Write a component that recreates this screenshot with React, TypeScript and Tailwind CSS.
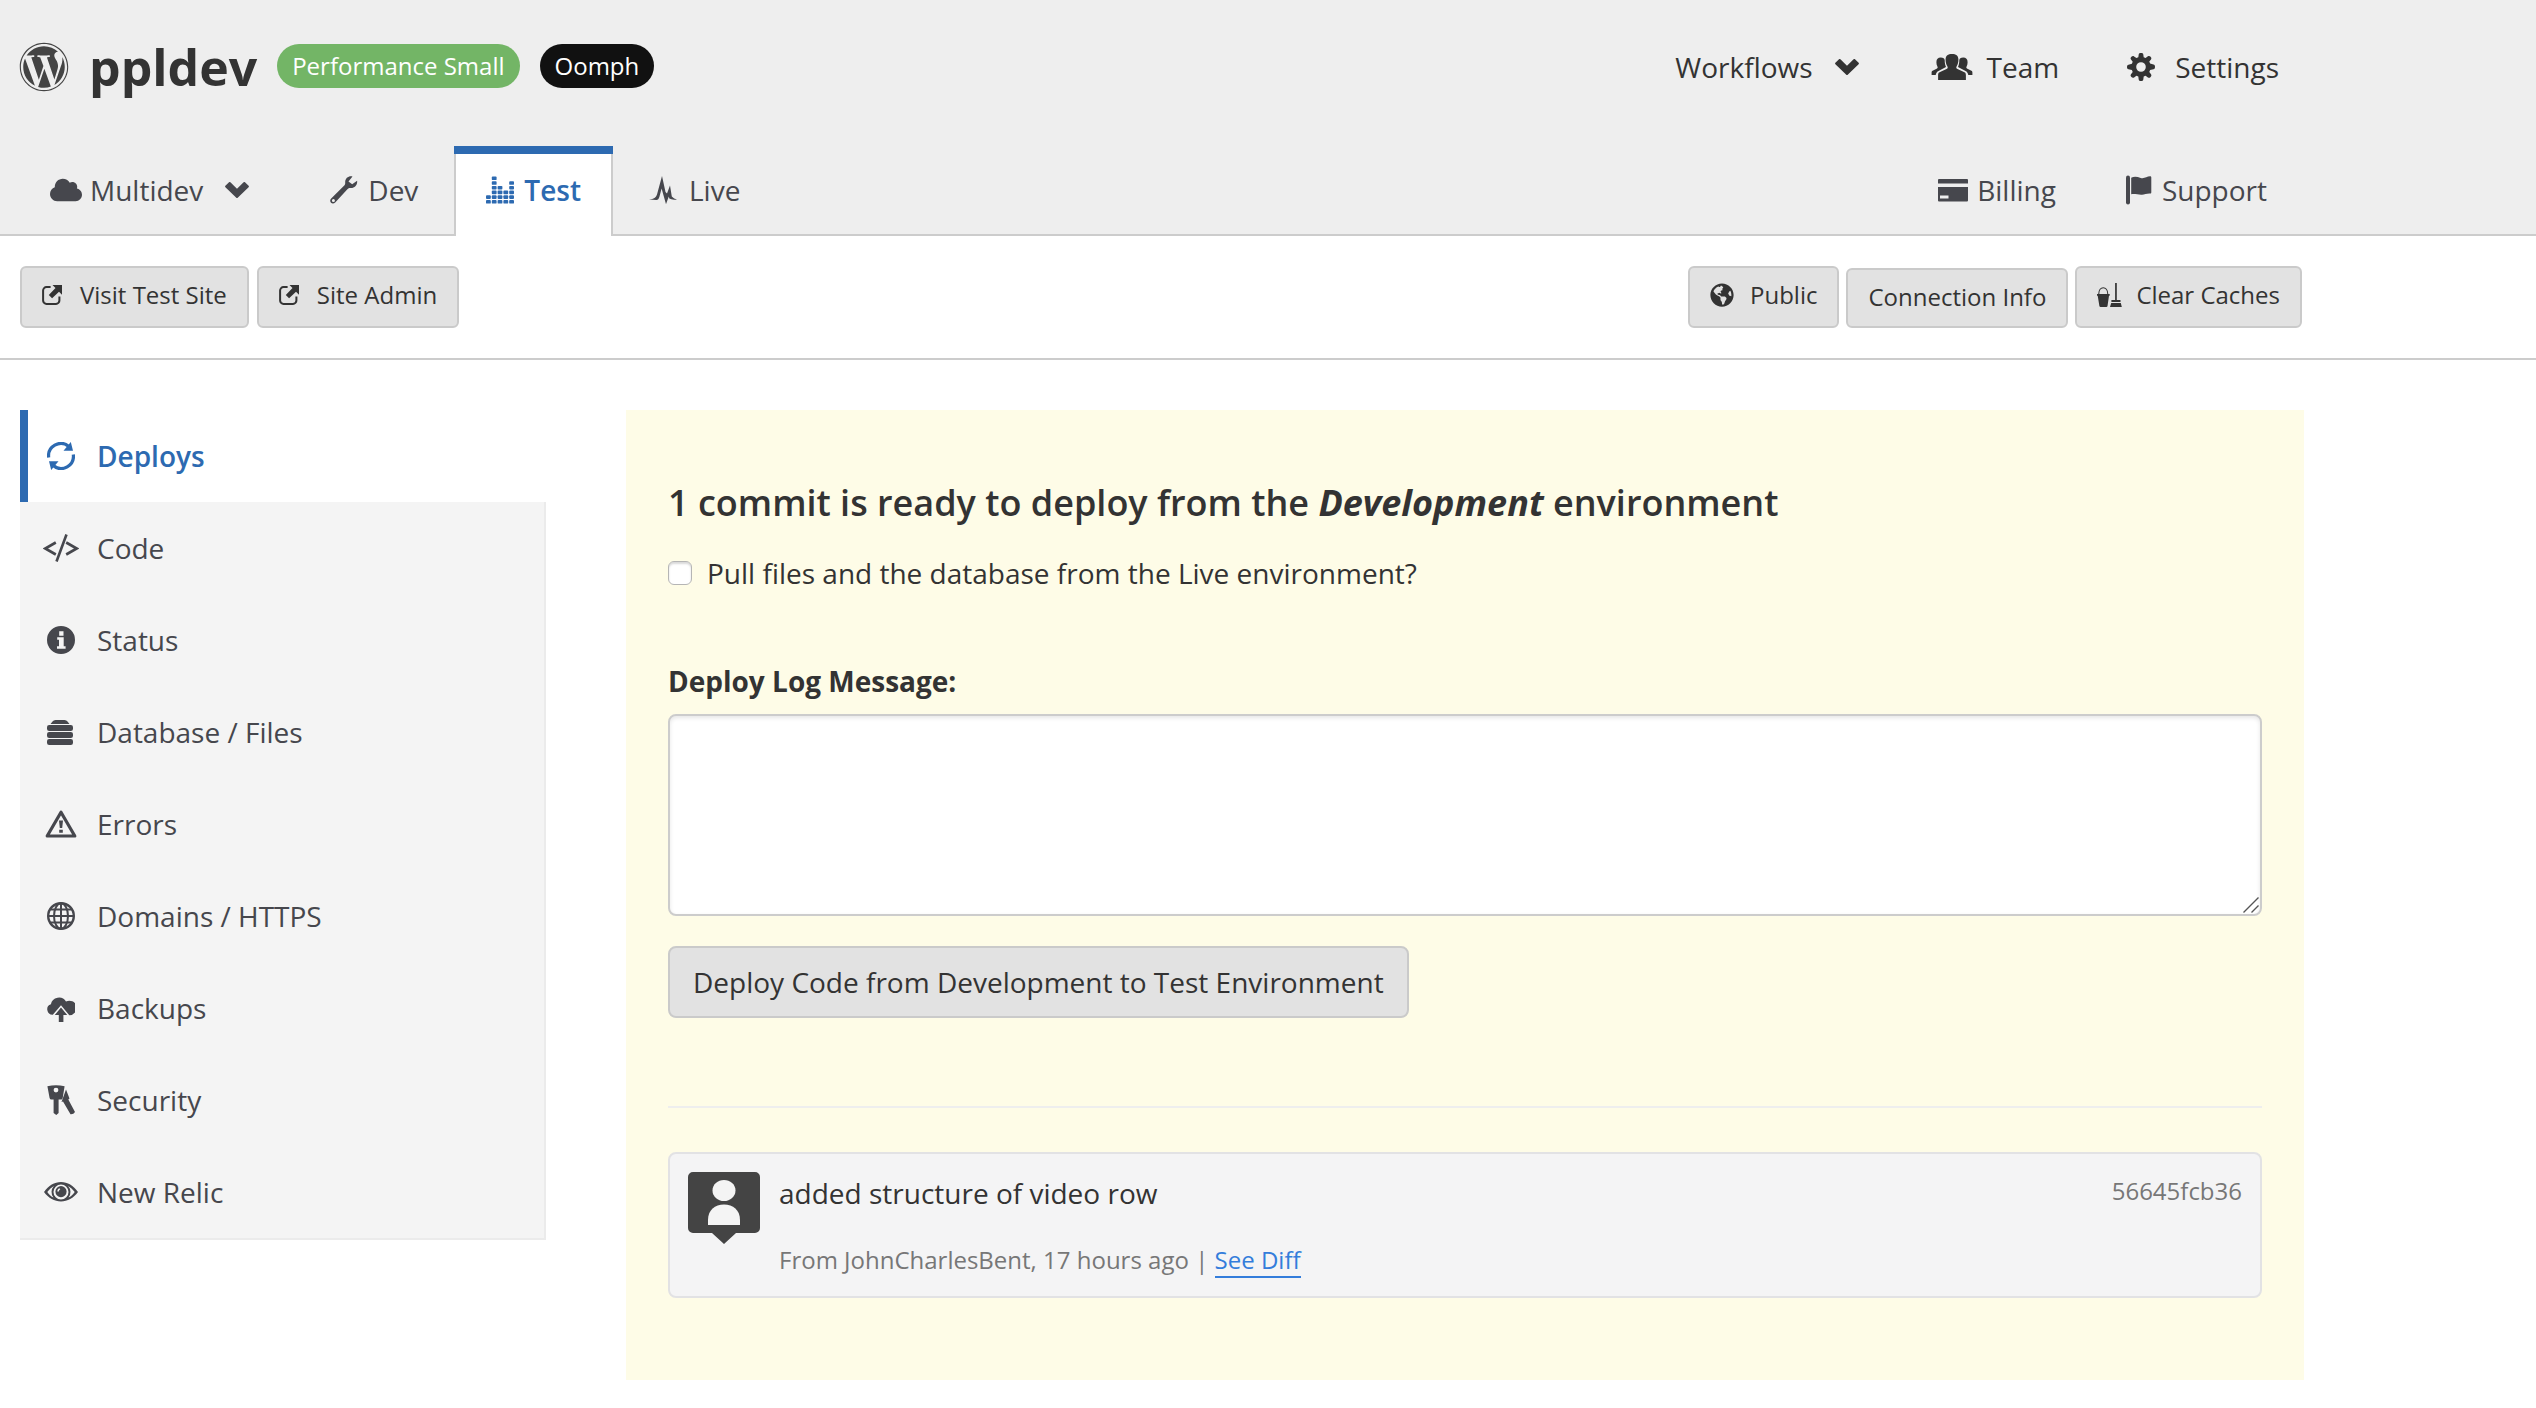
import type { ReactNode } from "react";
import { FaWordpress, FaCloud, FaGlobeAmericas } from "react-icons/fa";

type IconProps = { className?: string };

function Svg({ box = "0 0 28 28", className = "size-7", children }: { box?: string; className?: string; children: ReactNode }) {
  return (
    <svg viewBox={box} className={className} fill="currentColor" aria-hidden="true">
      {children}
    </svg>
  );
}

const Chevron = () => (
  <Svg box="0 0 24 16" className="h-4 w-6">
    <path d="M4 .3a1 1 0 0 1 1.400 0L12 6.800 18.600 .3a1 1 0 0 1 1.400 0l3.600 3.500a1 1 0 0 1 0 1.400L12.700 15.700a1 1 0 0 1-1.400 0L.4 5.200a1 1 0 0 1 0-1.400z" />
  </Svg>
);

const Wrench = () => (
  <Svg>
    <path
      fillRule="evenodd"
      d="M22.500 .5c-4-.9-7.600 2-7.300 6 .1 1.500-.2 2.300-1.200 3.300L1.200 22.400c-1.300 1.300-1.300 3.200-.2 4.300s2.900 1.100 4.200-.2L17.400 13.300c1-1 1.800-1.300 3.300-1.200 3.900.2 7-3.200 6.400-7.300l-4.900 3.400-3.700-2.800zM3.400 23a1.500 1.500 0 1 1 0 3 1.500 1.500 0 0 1 0-3z"
    />
  </Svg>
);

const BAR_DOTS = [2, 6, 4, 3, 5];
const Equalizer = () => (
  <Svg>
    {BAR_DOTS.flatMap((count, col) =>
      Array.from({ length: count }, (_, row) => (
        <rect key={`${col}-${row}`} x={col * 5.8} y={24 - row * 4.7} width="4.8" height="3.6" rx=".9" />
      )),
    )}
  </Svg>
);

const Pulse = () => (
  <Svg>
    <path d="M0 23.400C5 23 7 21.500 8 18.500L13 0l3.500 16 1.500 1.500 3-8 1.800 11q2.200 2.500 5.200 2.900-5 .8-7.700-.9l-.5-2L17 28.200 12.600 12.500l-2.100 8Q9.500 24 7.500 24z" />
  </Svg>
);

const Team = () => (
  <Svg box="0 0 42 28" className="h-7 w-[42px]">
    <path d="M8 19.500 15.500 16c1.500-.7 1.500-1.700.7-3-1-1.700-1.600-3.500-1.600-6.500C14.600 2.500 17 .9 21 .9s6.400 1.600 6.400 5.600c0 3-.6 4.800-1.600 6.500-.8 1.300-.8 2.300.7 3l7.500 3.500c.7.600.9 1.500.9 3V27H7.100v-4.500c0-1.500.2-2.400.9-3z" />
    <path d="M.6 22v-2.200c0-1 .2-1.600 1-2l4-2c1.200-.5 1.300-1.200.8-2.200-.7-1.200-1-2.600-1-4.300C5.400 6.100 7 4.600 9.700 4.600s3.800 1.100 4 2.700c0 3 .5 5 1.300 6.700L7 18.200c-1 .6-2 2-2.300 3.800z" />
    <path d="M41.400 22v-2.200c0-1-.2-1.600-1-2l-4-2c-1.200-.5-1.300-1.200-.8-2.200.7-1.200 1-2.600 1-4.300 0-3.200-1.600-4.700-4.300-4.700s-3.800 1.100-4 2.700c0 3-.5 5-1.300 6.700l8 4.200c1 .6 2 2 2.300 3.800z" />
  </Svg>
);

const Gear = () => (
  <Svg>
    <path
      fillRule="evenodd"
      d="M11.700 1.500C11.900 .4 12.700 0 14 0s2.100 .4 2.300 1.500l.4 2.800 1.900.7 2.300-1.700c.9-.7 1.900-.5 2.700.4s1.100 1.800.4 2.700l-1.700 2.200.8 2 3.400.9c1.100.2 1.500 1 1.500 2.300s-.4 2.300-1.500 2.500l-3.400.7-.8 2 1.700 2.300c.7.900.5 1.700-.4 2.700s-1.800 1.100-2.700.4l-2.300-1.700-1.900.8-.4 3C16.100 27.600 15.300 28 14 28s-2.100-.4-2.300-1.500l-.4-3-1.900-.8-2.300 1.700c-.9.700-1.800.5-2.700-.4s-1.100-1.800-.4-2.700l1.700-2.300-.8-2-3.400-.7C.4 16.100 0 15.300 0 14s.4-2.100 1.500-2.300l3.400-.9.8-2L4 6.500c-.7-.9-.5-1.800.4-2.700s1.800-1.100 2.700-.4L9.400 5l1.900-.7zM14 9.200a4.800 4.800 0 1 0 0 9.600 4.800 4.800 0 0 0 0-9.600z"
    />
  </Svg>
);

const Card = () => (
  <Svg box="0 0 30 24" className="h-6 w-8">
    <path d="M1 1h28a1 1 0 0 1 1 1v3.500H0V2a1 1 0 0 1 1-1z" />
    <path fillRule="evenodd" d="M0 9h30v13.500a1 1 0 0 1-1 1H1a1 1 0 0 1-1-1zm2 8.500v3h8.500v-3z" />
  </Svg>
);

const Flag = () => (
  <Svg box="0 0 26 30" className="h-[30px] w-[26px]">
    <rect x="0" y=".5" width="4" height="29" rx="2" />
    <path d="M5.200 2.700c3-1.500 6-1 9.500.2 3.400 1.200 6.200-1.600 9.300-1.600.8 0 1.300.4 1.300 1.200v14.800c0 .9-.4 1.300-1.300 1.200-3-.2-5.500 1-8 1.200-3.500.3-7-1.200-10.800-.5z" />
  </Svg>
);

const External = () => (
  <Svg box="0 0 20 20" className="size-5">
    <path d="M8.600 2.100H4.500a3.400 3.400 0 0 0-3.400 3.400v10a3.400 3.400 0 0 0 3.400 3.400h9.500a3.400 3.400 0 0 0 3.400-3.400v-3.900" fill="none" stroke="currentColor" strokeWidth="2" />
    <path d="M10.500 0H20v9.700l-3-2.900-6.900 6.400-3.300-3.300 6.700-6.800z" />
  </Svg>
);

const Bucket = () => (
  <Svg box="0 0 25 24" className="h-6 w-[25px]">
    <path d="M1.700 11.500C1.700 2.500 10.800 2.500 10.800 11.500" fill="none" stroke="currentColor" strokeWidth="1.100" />
    <path d="M0 11h12.700v1.700H12L10.500 23q-.1 1-1.200 1H3.600q-1 0-1.200-1L.7 12.700H0zM18.100 0h1.700v17h3.700v2H14.400v-2h3.700zM14.200 20h9.600l1 4H13z" />
  </Svg>
);

const Sync = () => (
  <Svg>
    <path d="M1.700 15.500A12.300 12.300 0 0 1 21.500 4.200M26.300 12.500A12.300 12.300 0 0 1 6.500 23.800" fill="none" stroke="currentColor" strokeWidth="3.200" />
    <path d="M23.800 0 26 8.800h-9.500zM4.200 28 2 19.200h9.500z" />
  </Svg>
);

const Code = () => (
  <Svg box="0 0 36 28" className="h-7 w-9">
    <path d="M12.800 8.500 2.300 14.500l10.500 6M23.200 8.500l10.500 6-10.500 6M23.500 .5 13.500 27.500" fill="none" stroke="currentColor" strokeWidth="2.600" />
  </Svg>
);

const Info = () => (
  <Svg>
    <path fillRule="evenodd" d="M14 0a14 14 0 1 1 0 28 14 14 0 0 1 0-28zm-1.800 5.300v4.400h4.300V5.300zm-2 6v2.400h1.800v6.500h-2v2.500h8.600v-2.500h-1.900v-8.900z" />
  </Svg>
);

const Database = () => (
  <Svg>
    <path d="M5.500 3.500Q6.500 2 8.500 2h9q2 0 3 1.500L22.500 6h-19z" />
    <rect x="0" y="7" width="26" height="6" rx="2.200" />
    <rect x="0" y="14" width="26" height="6" rx="2.200" />
    <rect x="0" y="21" width="26" height="6" rx="2.200" />
  </Svg>
);

const Warning = () => (
  <Svg box="0 0 32 28" className="h-7 w-8">
    <path d="M16 2.200 29.800 26H2.200z" fill="none" stroke="currentColor" strokeWidth="3.200" strokeLinejoin="round" />
    <path d="M14 10.500h4l-.8 7.500h-2.400zM14.200 19.800h3.600v3h-3.600z" />
  </Svg>
);

const Globe = () => (
  <Svg>
    <g fill="none" stroke="currentColor">
      <circle cx="14" cy="14" r="12.800" strokeWidth="2.400" />
      <ellipse cx="14" cy="14" rx="7" ry="12.800" strokeWidth="2" />
      <path d="M14 1v26M1 14h26M3.500 7.500h21M3.500 20.500h21" strokeWidth="2" />
    </g>
  </Svg>
);

const CloudUp = () => (
  <Svg>
    <path d="M5.800 20.700A5.400 5.400 0 0 1 3.900 10.200 8.200 8.200 0 0 1 19 7.500a7.300 7.300 0 1 1 3.300 13.800L14 11.200z" />
    <path d="M14 13.500 20.200 21h-3.800v7h-4.600v-7H7.800z" />
  </Svg>
);

const Keys = () => (
  <Svg box="0 0 28 30" className="h-[30px] w-7">
    <path fillRule="evenodd" d="M.4 1.200Q9 -.8 17.600 1.200L15.700 13q-.2 1.500-1.500 1.500h-2.600V28L9.300 30 6.600 28V14.500H4.400q-1.500 0-1.800-1.500zM9 2.700a2.400 2.400 0 1 0 0 4.800 2.400 2.400 0 0 0 0-4.800z" />
    <path d="M19 4.500 22.500 13.500 21.300 14.600 28 27q-1.500 2.500-4.500 2.200L16 16.500l-1.500.4z" />
  </Svg>
);

const Eye = () => (
  <Svg box="0 0 34 24" className="h-6 w-[34px]">
    <path fillRule="evenodd" d="M0 12C4.500 5.500 10.500 2 17 2s12.500 3.500 17 10c-4.500 6-10.500 9.500-17 9.500S4.500 18 0 12zm3.300 0c2 2.800 4 4.500 6.200 5.600a9 9 0 0 1 .4-11.700C7.500 7.300 5.300 9.300 3.300 12zm27.400 0c-2-2.700-4.200-4.700-6.600-6.100a9 9 0 0 1 .4 11.700c2.200-1.100 4.200-2.800 6.200-5.600zM17 4.500a7.500 7.500 0 1 0 0 15 7.500 7.500 0 0 0 0-15z" />
    <path fillRule="evenodd" d="M17 6a5.600 5.600 0 1 1 0 11.200A5.600 5.600 0 0 1 17 6zm-1.500 2.200c-1.500.6-2.200 1.700-2.200 3.400h1.600c0-1.200.4-1.800 1.400-2.200z" />
  </Svg>
);

const Avatar = () => (
  <Svg box="0 0 72 72" className="size-[72px] shrink-0 text-[#444]">
    <path d="M5 0h62a5 5 0 0 1 5 5v51a5 5 0 0 1-5 5H48L36 72 24 61H5a5 5 0 0 1-5-5V5a5 5 0 0 1 5-5z" />
    <ellipse cx="36" cy="18.500" rx="11.500" ry="10.500" fill="#f4f4f4" />
    <path d="M20 53V48c0-10 7-15.500 16-15.500S52 38 52 48v5z" fill="#f4f4f4" />
  </Svg>
);

const sideItems: { label: string; icon: (p: IconProps) => ReactNode }[] = [
  { label: "Deploys", icon: Sync },
  { label: "Code", icon: Code },
  { label: "Status", icon: Info },
  { label: "Database / Files", icon: Database },
  { label: "Errors", icon: Warning },
  { label: "Domains / HTTPS", icon: Globe },
  { label: "Backups", icon: CloudUp },
  { label: "Security", icon: Keys },
  { label: "New Relic", icon: Eye },
];

const toolButton =
  "flex items-center rounded-md border-2 border-[#cacaca] bg-[#e2e2e2] text-2xl text-[#333]";

function Header() {
  return (
    <header className="border-b-2 border-[#ccc] bg-[#eee]">
      <div className="flex h-[234px] max-w-[2304px] flex-col justify-between">
        <div className="flex h-[134px] items-center justify-between pl-[19px] pr-[25px]">
          <div className="flex items-center">
            <FaWordpress className="size-[50px] text-[#444]" />
            <h1 className="ml-5 text-[50px] leading-[60px] font-bold">ppldev</h1>
            <span className="mb-0.5 ml-5 flex h-11 items-center rounded-full bg-[#73b566] px-[15px] text-2xl text-white">Performance Small</span>
            <span className="mb-0.5 ml-5 flex h-11 items-center rounded-full bg-[#111] px-[15px] text-2xl text-white">Oomph</span>
          </div>
          <nav className="flex items-center">
            <button type="button" className="flex items-center gap-[22px]">
              Workflows <Chevron />
            </button>
            <a href="#team" className="ml-[72px] flex items-center gap-[14px]">
              <Team /> Team
            </a>
            <a href="#settings" className="ml-[68px] flex items-center gap-5">
              <Gear /> Settings
            </a>
          </nav>
        </div>
        <div className="flex items-end justify-between pr-[37px] text-[#46474d]">
          <nav className="-mb-0.5 flex items-end">
            <button type="button" className="flex h-[90px] items-center pb-0.5 pl-[50px]">
              <FaCloud className="mr-2 size-8" />
              Multidev
              <span className="ml-[22px]">
                <Chevron />
              </span>
            </button>
            <a href="#dev" className="flex h-[90px] items-center gap-2.5 pr-9 pb-0.5 pl-[81px]">
              <Wrench /> Dev
            </a>
            <a href="#test" aria-current="page" className="flex h-[90px] flex-col bg-white font-semibold text-[#2d6ab1]">
              <span className="h-2 bg-[#2d6ab1]" />
              <span className="flex flex-1 items-center gap-2.5 border-x-2 border-[#ccc] px-[30px] pb-2.5">
                <Equalizer /> Test
              </span>
            </a>
            <a href="#live" className="flex h-[90px] items-center gap-3 pb-0.5 pl-9">
              <Pulse /> Live
            </a>
          </nav>
          <nav className="flex h-[88px] items-center pb-px">
            <a href="#billing" className="flex items-center gap-2">
              <Card /> Billing
            </a>
            <a href="#support" className="ml-[70px] flex items-center gap-2.5">
              <Flag /> Support
            </a>
          </nav>
        </div>
      </div>
    </header>
  );
}

function Toolbar() {
  return (
    <div className="border-b-2 border-[#ccc]">
      <div className="flex max-w-[2304px] items-end justify-between pt-[30px] pr-0.5 pb-[30px] pl-5">
        <div className="flex gap-2">
          <a href="#visit" className={`${toolButton} h-[62px] gap-[18px] px-5 pb-1`}>
            <External /> Visit Test Site
          </a>
          <a href="#admin" className={`${toolButton} h-[62px] gap-[18px] px-5 pb-1`}>
            <External /> Site Admin
          </a>
        </div>
        <div className="flex items-end gap-[7px]">
          <button type="button" className={`${toolButton} h-[62px] gap-4 px-5 pb-1`}>
            <FaGlobeAmericas className="size-6" /> Public
          </button>
          <button type="button" className={`${toolButton} h-[60px] px-5 pb-0.5`}>
            Connection Info
          </button>
          <button type="button" className={`${toolButton} h-[62px] gap-[14px] px-5 pb-1`}>
            <Bucket /> Clear Caches
          </button>
        </div>
      </div>
    </div>
  );
}

function Sidebar() {
  return (
    <nav className="w-[526px] shrink-0 text-[#46474d]">
      {sideItems.map(({ label, icon: Icon }, i) => (
        <a
          key={label}
          href={`#${label.toLowerCase().replace(/[^a-z]+/g, "-")}`}
          aria-current={i === 0 ? "page" : undefined}
          className={
            i === 0
              ? "flex h-[92px] items-center border-l-8 border-[#2d6ab1] pl-3 font-semibold text-[#2d6ab1]"
              : "flex h-[92px] items-center border-r-2 border-[#ebebeb] bg-[#f4f4f4] pl-5 last:h-[94px] last:border-b-2"
          }
        >
          <span className="mr-[15px] flex w-[42px] justify-center">
            <Icon />
          </span>
          {label}
        </a>
      ))}
    </nav>
  );
}

function DeployPanel() {
  return (
    <main className="min-w-0 flex-1 bg-[#fefce7] px-[42px] pt-[66px] pb-[82px]">
      <h2 className="text-4xl leading-[54px] font-semibold">
        1 commit is ready to deploy from the <em className="font-bold">Development</em> environment
      </h2>
      <label className="mt-[22px] flex h-[42px] items-center gap-[15px]">
        <input
          type="checkbox"
          className="size-6 shrink-0 appearance-none rounded-md border border-[#b5b5b5] bg-white shadow-[inset_0_2px_2px_rgba(0,0,0,0.15)] checked:bg-[#2d6ab1]"
        />
        Pull files and the database from the Live environment?
      </label>
      <label htmlFor="deploy-message" className="mt-[66px] block leading-[42px] font-bold">
        Deploy Log Message:
      </label>
      <div className="relative mt-3">
        <textarea
          id="deploy-message"
          className="block h-[202px] w-full resize-none rounded-lg border-2 border-[#ccc] bg-white p-3 shadow-[inset_0_2px_4px_rgba(0,0,0,0.1)]"
        />
        <svg viewBox="0 0 16 16" className="pointer-events-none absolute right-[3px] bottom-[3px] size-4" fill="none" stroke="#555" strokeWidth="1.400" aria-hidden="true">
          <path d="M.5 15.500 15.500 .5M8.500 15.500l7-7" />
        </svg>
      </div>
      <button type="button" className="mt-[30px] flex h-[72px] items-center rounded-lg border-2 border-[#cacaca] bg-[#e2e2e2] px-[23px]">
        Deploy Code from Development to Test Environment
      </button>
      <hr className="mt-[88px] border-t-2 border-[#eee]" />
      <article className="mt-11 flex h-[146px] rounded-lg border-2 border-[#e2e2e4] bg-[#f4f4f5] px-[18px] pt-[18px]">
        <Avatar />
        <div className="ml-[19px] flex-1">
          <p className="leading-[42px]">added structure of video row</p>
          <p className="mt-7 text-2xl leading-9 text-[#777]">
            From JohnCharlesBent, 17 hours ago |{" "}
            <a href="#diff" className="border-b-2 border-[#337ddb] text-[#337ddb]">
              See Diff
            </a>
          </p>
        </div>
        <span className="text-2xl leading-[38px] text-[#777]">56645fcb36</span>
      </article>
    </main>
  );
}

export default function App() {
  return (
    <div className="min-h-screen bg-white text-[28px] leading-[42px] text-[#333] [font-family:'Open_Sans',sans-serif]">
      <Header />
      <Toolbar />
      <div className="flex max-w-[2304px] items-start gap-20 pt-[50px] pl-5">
        <Sidebar />
        <DeployPanel />
      </div>
    </div>
  );
}
